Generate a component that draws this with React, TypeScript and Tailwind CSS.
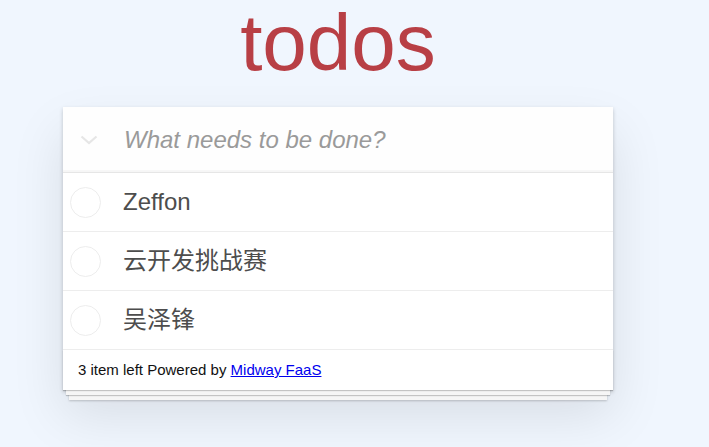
import React from "react";

const items = ["Zeffon", "云开发挑战赛", "吴泽锋"];

export default function App() {
  return (
    <div
      className="min-h-[447px] w-full bg-[#f0f6fe] overflow-hidden"
      style={{ fontFamily: '"Liberation Sans", Arial, "Noto Sans CJK SC", sans-serif' }}
    >
      <div className="ml-[63px] w-[550px]">
        <h1 className="h-[86px] text-center text-[80px] leading-[86px] font-normal text-[#b83f45]">
          todos
        </h1>
        <div className="mt-[21px] bg-white shadow-[0_2px_4px_0_rgba(0,0,0,0.2),0_25px_50px_0_rgba(0,0,0,0.1)]">
          <div className="relative flex h-[65px] items-center bg-[rgba(0,0,0,0.003)] shadow-[inset_0_-2px_1px_rgba(0,0,0,0.03)]">
            <svg
              className="absolute left-[17px] top-[28px]"
              width="18"
              height="10"
              viewBox="0 0 18 10"
              fill="none"
            >
              <path d="M1.5 1.5 L9 8 L16.5 1.5" stroke="#e6e6e6" strokeWidth="2.2" />
            </svg>
            <div className="pl-[61px] text-[24px] italic leading-[28px] text-[#9a9a9a]">
              What needs to be done?
            </div>
          </div>
          <ul className="border-t border-[#e6e6e6]">
            {items.map((t) => (
              <li key={t} className="flex h-[59px] items-center border-b border-[#ededed]">
                <div className="ml-[7px] h-[31px] w-[31px] shrink-0 rounded-full border border-[#ededed]" />
                <span className="ml-[22px] text-[24px] leading-[28px] text-[#4d4d4d]">{t}</span>
              </li>
            ))}
          </ul>
          <div className="h-[40px] px-[15px] py-[10px] text-[15px] leading-[20px] text-[#111] shadow-[0_1px_1px_rgba(0,0,0,0.2),0_8px_0_-3px_#f6f6f6,0_9px_1px_-3px_rgba(0,0,0,0.2),0_16px_0_-6px_#f6f6f6,0_17px_2px_-6px_rgba(0,0,0,0.2)]">
            3 item left Powered by{" "}
            <a href="#" className="text-[#0000ee] underline">
              Midway FaaS
            </a>
          </div>
        </div>
      </div>
    </div>
  );
}
